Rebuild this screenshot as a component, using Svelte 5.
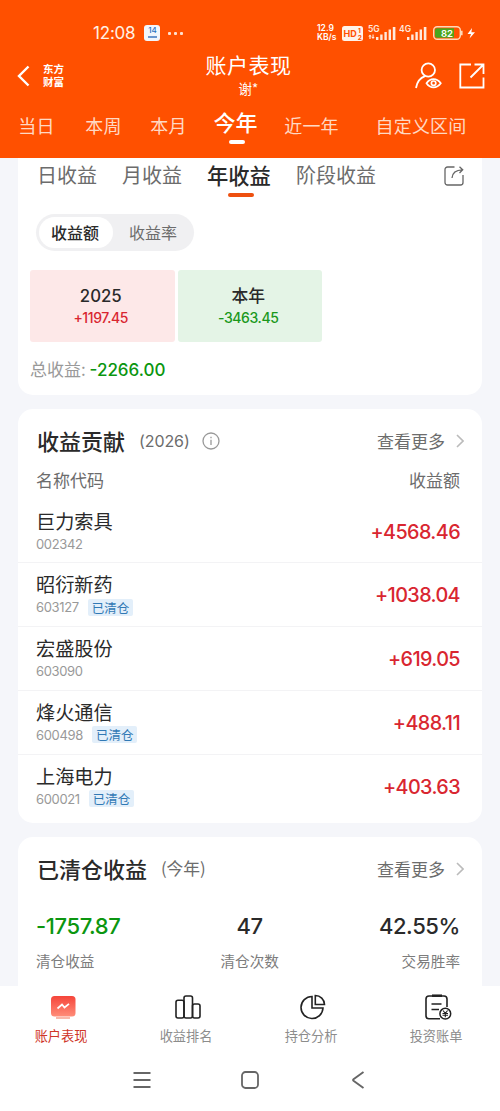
<script>
    let periods = ["当日", "本周", "本月", "今年", "近一年", "自定义区间"];
    let activePeriod = "今年";

    let profitTabs = ["日收益", "月收益", "年收益", "阶段收益"];
    let activeProfitTab = "年收益";

    let mode = "收益额";

    const years = [
        { label: "2025", value: "+1197.45", up: true },
        { label: "本年", value: "-3463.45", up: false }
    ];

    const stocks = [
        { name: "巨力索具", code: "002342", closed: false, profit: "+4568.46" },
        { name: "昭衍新药", code: "603127", closed: true, profit: "+1038.04" },
        { name: "宏盛股份", code: "603090", closed: false, profit: "+619.05" },
        { name: "烽火通信", code: "600498", closed: true, profit: "+488.11" },
        { name: "上海电力", code: "600021", closed: true, profit: "+403.63" }
    ];
</script>

<div class="screen">
    <header>
        <div class="status">
            <span class="time">12:08</span>
            <span class="calendar"><b>14</b><i></i></span>
            <span class="more"><i></i><i></i><i></i></span>
            <span class="spacer"></span>
            <span class="speed">12.9<br />KB/s</span>
            <svg class="hd" width="21" height="15" viewBox="0 0 21 15">
                <rect width="21" height="15" rx="2.5" fill="#fff3ea" />
                <text x="1.5" y="11" font-size="9" font-weight="700" fill="#ff5000">HD</text>
                <text x="16" y="7" font-size="6.5" font-weight="700" fill="#ff5000">1</text>
                <text x="15.7" y="13.5" font-size="6.5" font-weight="700" fill="#ff5000">2</text>
            </svg>
            <svg class="signal" width="28" height="16" viewBox="0 0 28 16" fill="#ffeadd">
                <text x="0" y="7" font-size="8.5" font-weight="600">5G</text>
                <path d="M2 9.5 3.8 11.5H2.6V14H1.4V11.5H.2zM5 14 3.4 12H4.5V9.5H5.6V12H6.7z" />
                <rect x="8" y="12" width="2.4" height="3" />
                <rect x="12.2" y="9.5" width="2.4" height="5.5" />
                <rect x="16.4" y="7" width="2.4" height="8" />
                <rect x="20.6" y="4.5" width="2.4" height="10.5" />
                <rect x="24.8" y="2" width="2.6" height="13" />
            </svg>
            <svg class="signal second" width="28" height="16" viewBox="0 0 28 16" fill="#ffeadd">
                <text x="0" y="7" font-size="8.5" font-weight="600">4G</text>
                <rect x="8" y="12" width="2.4" height="3" />
                <rect x="12.2" y="9.5" width="2.4" height="5.5" />
                <rect x="16.4" y="7" width="2.4" height="8" />
                <rect x="20.6" y="4.5" width="2.4" height="10.5" />
                <rect x="24.8" y="2" width="2.6" height="13" />
            </svg>
            <svg class="battery" width="42" height="14" viewBox="0 0 42 14">
                <rect x=".7" y=".7" width="26.6" height="12.6" rx="3.5" fill="none" stroke="#ffd9b8" stroke-width="1.4" />
                <path d="M4 2.2H21V11.8H4a2 2 0 0 1-2-2V4.2a2 2 0 0 1 2-2z" fill="#4aa51c" />
                <path d="M28.8 4.7v4.6" stroke="#ffd9b8" stroke-width="1.6" />
                <text x="8" y="10.5" font-size="9.5" font-weight="600" fill="#fff">82</text>
                <path d="M39 2 34.5 8H38l-1.5 4.5L42 6.2h-3.6z" fill="#fff" />
            </svg>
        </div>

        <div class="titlebar">
            <div class="side">
                <svg width="13" height="22" viewBox="0 0 13 22">
                    <path d="M11.5 1.5 2 11l9.5 9.5" fill="none" stroke="#fff" stroke-width="2.4" />
                </svg>
                <div class="brand"><span>东方</span><span>财富</span></div>
            </div>
            <div class="title">
                <h1>账户表现</h1>
                <p>谢*</p>
            </div>
            <div class="side right">
                <svg width="27" height="27" viewBox="0 0 27 27" fill="none" stroke="#fff" stroke-width="1.8">
                    <circle cx="13.3" cy="8" r="6.7" />
                    <path d="M1 26C2 20 5 16 10 14.2" />
                    <path d="M11.5 21.3c3.5-5.6 10.5-5.6 14.3 0c-3.8 5.4-10.8 5.4-14.3 0z" stroke-width="1.7" />
                    <circle cx="18.6" cy="21.2" r="2.2" stroke-width="1.7" />
                </svg>
                <svg width="26" height="26" viewBox="0 0 26 26" fill="none" stroke="#fff" stroke-width="1.8">
                    <path d="M12 1.5H1.3V24.5H24.5V14.5M15.5 1.5H24.5V11M24 2 11.5 14.5" />
                </svg>
            </div>
        </div>

        <nav class="periods">
            {#each periods as period}
                <button class:active={period === activePeriod} on:click={() => (activePeriod = period)}>{period}</button>
            {/each}
        </nav>
    </header>

    <main>
        <section class="card overview">
            <div class="profit-tabs">
                {#each profitTabs as tab}
                    <button class:active={tab === activeProfitTab} on:click={() => (activeProfitTab = tab)}>{tab}</button>
                {/each}
                <svg width="20" height="20" viewBox="0 0 20 20" fill="none" stroke="#666" stroke-width="1.3">
                    <path d="M10.5 1H3.5A2.5 2.5 0 0 0 1 3.5V16.5A2.5 2.5 0 0 0 3.5 19H16.5A2.5 2.5 0 0 0 19 16.5V9" />
                    <path d="M8 12C8.3 7 11.5 4 18.5 3.8M15.5 .8 18.7 3.8 15.5 7" />
                </svg>
            </div>

            <div class="segment">
                {#each ["收益额", "收益率"] as item}
                    <button class:active={mode === item} on:click={() => (mode = item)}>{item}</button>
                {/each}
            </div>

            <div class="tiles">
                {#each years as year}
                    <div class="tile" class:up={year.up}>
                        <strong>{year.label}</strong>
                        <span>{year.value}</span>
                    </div>
                {/each}
            </div>

            <p class="total">总收益: <b>-2266.00</b></p>
        </section>

        <section class="card contribution">
            <div class="card-head">
                <h2>收益贡献</h2>
                <span class="note">(2026)</span>
                <svg class="info" width="18" height="18" viewBox="0 0 18 18" fill="none" stroke="#999" stroke-width="1.3">
                    <circle cx="9" cy="9" r="8" />
                    <path d="M9 7.8V13M9 4.8V6.3" />
                </svg>
                <span class="link">查看更多</span>
                <svg width="8" height="14" viewBox="0 0 8 14"><path d="M1 1 7 7 1 13" fill="none" stroke="#bbb" stroke-width="1.6" /></svg>
            </div>
            <div class="columns"><span>名称代码</span><span>收益额</span></div>
            {#each stocks as stock (stock.code)}
                <div class="row">
                    <div>
                        <h3>{stock.name}</h3>
                        <p class="code">
                            {stock.code}
                            {#if stock.closed}<span class="tag">已清仓</span>{/if}
                        </p>
                    </div>
                    <span class="profit">{stock.profit}</span>
                </div>
            {/each}
        </section>

        <section class="card closed">
            <div class="card-head">
                <h2>已清仓收益</h2>
                <span class="note cjk">(今年)</span>
                <span class="link">查看更多</span>
                <svg width="8" height="14" viewBox="0 0 8 14"><path d="M1 1 7 7 1 13" fill="none" stroke="#bbb" stroke-width="1.6" /></svg>
            </div>
            <div class="stats">
                <div><b class="down">-1757.87</b><span>清仓收益</span></div>
                <div><b>47</b><span>清仓次数</span></div>
                <div><b>42.55%</b><span>交易胜率</span></div>
            </div>
        </section>
    </main>

    <footer>
        <nav class="tabbar">
            <div class="tab active">
                <svg width="28" height="28" viewBox="0 0 28 28">
                    <defs>
                        <linearGradient id="chartFill" x1="0" y1="0" x2="0" y2="1">
                            <stop offset="0" stop-color="#f5453a" />
                            <stop offset="1" stop-color="#ff8d79" />
                        </linearGradient>
                    </defs>
                    <rect x="2" y="2" width="24.5" height="20.5" rx="3.5" fill="url(#chartFill)" />
                    <path d="M7 24h14" stroke="#f9a08e" stroke-width="1.5" />
                    <path d="M8.5 14.5 13 10.5 15.5 13.5 20 9.8" fill="none" stroke="#fff" stroke-width="1.7" />
                </svg>
                <span>账户表现</span>
            </div>
            <div class="tab">
                <svg width="28" height="28" viewBox="0 0 28 28" fill="none" stroke="#222" stroke-width="1.6">
                    <rect x="2" y="6.3" width="8" height="17.7" rx="2" />
                    <rect x="10" y="2" width="8.5" height="22" rx="2" />
                    <rect x="18.5" y="10" width="7.5" height="14" rx="2" />
                </svg>
                <span>收益排名</span>
            </div>
            <div class="tab">
                <svg width="28" height="28" viewBox="0 0 28 28" fill="none" stroke="#222" stroke-width="1.6">
                    <path d="M13 2.5A11 11 0 1 0 24 14H13z" />
                    <path d="M16.3 1.5V10.5H25.5A9.2 9.2 0 0 0 16.3 1.5z" />
                </svg>
                <span>持仓分析</span>
            </div>
            <div class="tab">
                <svg width="28" height="28" viewBox="0 0 28 28" fill="none" stroke="#222" stroke-width="1.6">
                    <path d="M16 24.7H5A3 3 0 0 1 2 21.7V5A3 3 0 0 1 5 2H20A3 3 0 0 1 23 5V13" />
                    <path d="M8 1.7H18" stroke-width="2.5" />
                    <path d="M7.5 10H17.5M7.5 15.5H15" />
                    <circle cx="21.3" cy="19.7" r="5.4" fill="#fff" stroke-width="1.5" />
                    <path d="M19 16.5 21.3 19.3 23.6 16.5M18.5 19.5H24M18.5 21.3H24M21.3 19.3V23.2" stroke-width="1.1" />
                </svg>
                <span>投资账单</span>
            </div>
        </nav>
        <div class="system">
            <svg width="18" height="18" viewBox="0 0 18 18" stroke="#666" stroke-width="2"><path d="M.5 2H17.5M.5 9H17.5M.5 16H17.5" /></svg>
            <svg width="18" height="18" viewBox="0 0 18 18" fill="none" stroke="#666" stroke-width="1.8"><rect x="1" y="1" width="16" height="16" rx="3.5" /></svg>
            <svg width="18" height="18" viewBox="0 0 18 18" fill="none" stroke="#666" stroke-width="1.9"><path d="M14.5 1 4.5 8.2Q3.6 9 4.5 9.8L14.5 17" /></svg>
        </div>
    </footer>
</div>

<style>
:global(body) {
    margin: 0;
    background: #f5f6fa;
}

.screen {
    width: 500px;
    height: 1111px;
    display: flex;
    flex-direction: column;
    overflow: hidden;
    background: #f5f6fa;
    color: #2a2a2a;
    font-family: "Noto Sans CJK SC", sans-serif;
}

h1, h2, h3, p {
    margin: 0;
    font-weight: 400;
}

button {
    border: none;
    background: none;
    padding: 0;
    font: inherit;
    color: inherit;
    white-space: nowrap;
}

svg {
    display: block;
    flex: none;
}

/* Header */
header {
    height: 158px;
    flex: none;
    background: #ff5000;
    color: #fff;
}

.status {
    height: 50px;
    box-sizing: border-box;
    padding: 16px 25px 0 93px;
    display: flex;
    align-items: center;
    font-family: Inter, sans-serif;
}

.time {
    font-size: 17px;
    letter-spacing: -0.2px;
    color: #fff0e4;
}

.calendar {
    width: 16px;
    height: 16px;
    margin-left: 9px;
    border-radius: 3px;
    background: #f2f6fc;
    color: #2a70bd;
    display: flex;
    flex-direction: column;
    align-items: center;
}

.calendar b {
    font-size: 8px;
    line-height: 11px;
    font-weight: 500;
}

.calendar i {
    width: 9px;
    height: 2px;
    background: #6996ce;
}

.more {
    display: flex;
    gap: 3px;
    margin-left: 8px;
}

.more i {
    width: 3px;
    height: 3px;
    border-radius: 1px;
    background: #ffe0cf;
}

.spacer {
    flex: 1;
}

.speed {
    font-size: 8.5px;
    line-height: 9px;
    font-weight: 600;
    width: 25px;
}

.signal {
    margin-left: 5px;
}

.signal.second {
    margin-left: 3px;
}

.battery {
    margin-left: 6px;
}

.titlebar {
    height: 50px;
    display: grid;
    grid-template-columns: 1fr auto 1fr;
    align-items: center;
}

.side {
    display: flex;
    align-items: center;
    padding-left: 17px;
    gap: 12px;
}

.side.right {
    justify-content: flex-end;
    padding: 0 15px 0 0;
    gap: 17px;
}

.brand {
    display: flex;
    flex-direction: column;
    padding-left: 1px;
    font-size: 10.5px;
    line-height: 12.5px;
    font-weight: 700;
}

.title {
    text-align: center;
    padding: 0 3px 3px 0;
}

.title h1 {
    font-size: 21px;
    line-height: 28px;
    letter-spacing: 0.5px;
}

.title p {
    font-size: 13.5px;
    line-height: 20px;
}

.periods {
    height: 58px;
    display: grid;
    grid-template-columns: 73px 61px 69px 65px 87px 132px;
}

.periods button {
    height: 50px;
    font-size: 18px;
    line-height: 50px;
    letter-spacing: 0.2px;
    color: #ffd9c4;
    display: flex;
    flex-direction: column;
    align-items: center;
}

.periods button.active {
    font-size: 22px;
    font-weight: 500;
    line-height: 42px;
    letter-spacing: 0;
    color: #fff;
}

.periods button.active::after {
    content: "";
    width: 16px;
    height: 4px;
    border-radius: 2px;
    margin-top: -2px;
    margin-left: 2px;
    flex: none;
    background: #fff;
}

/* Cards */
main {
    flex: 1;
    min-height: 0;
    overflow: hidden;
    padding: 0 18px;
    display: flex;
    flex-direction: column;
    gap: 14px;
}

.card {
    background: #fff;
    border-radius: 15px;
    flex: none;
    box-sizing: border-box;
}

.overview {
    height: 237px;
    border-radius: 0 0 15px 15px;
    padding: 0 18px 0 12px;
}

.profit-tabs {
    height: 56px;
    padding-left: 7px;
    display: flex;
    gap: 25px;
}

.profit-tabs button {
    height: 39px;
    font-size: 20px;
    line-height: 33px;
    color: #6c6c6c;
    display: flex;
    flex-direction: column;
    align-items: center;
}

.profit-tabs .active {
    font-size: 21.3px;
    font-weight: 500;
    color: #2a2a2a;
}

.profit-tabs .active::after {
    content: "";
    width: 26px;
    height: 4px;
    margin: 2px 0 0 4px;
    border-radius: 2px;
    background: #ee500f;
    flex: none;
}

.profit-tabs svg {
    margin: 8px 0 0 auto;
}

.segment {
    width: 158px;
    height: 37px;
    margin-left: 6px;
    box-sizing: border-box;
    padding: 3px;
    border-radius: 19px;
    background: #f0f0f2;
    display: flex;
}

.segment button {
    width: 74px;
    padding: 0 2px 2px 0;
    font-size: 16px;
    line-height: 28px;
    border-radius: 16px;
    color: #6c6c6c;
    margin-right: 4px;
    flex: none;
}

.segment .active {
    background: #fff;
    color: #2a2a2a;
    font-weight: 500;
}

.tiles {
    display: flex;
    gap: 3px;
    margin-top: 19px;
}

.tile {
    width: 144.5px;
    height: 72px;
    box-sizing: border-box;
    padding: 14px 3px 0 0;
    border-radius: 3px;
    background: #e4f4e6;
    color: #1a981c;
    display: flex;
    flex-direction: column;
    align-items: center;
}

.tile.up {
    background: #fde8e8;
    color: #d92630;
}

.tile strong {
    font-family: Inter, "Noto Sans CJK SC", sans-serif;
    font-size: 16.8px;
    line-height: 25px;
    font-weight: 500;
    color: #2a2a2a;
}

.tile span {
    font-family: Inter, sans-serif;
    font-size: 14px;
    line-height: 18px;
    font-weight: 500;
    letter-spacing: -0.4px;
}

.total {
    margin-top: 14px;
    font-size: 17px;
    line-height: 25px;
    color: #999;
}

.total b {
    font-family: Inter, sans-serif;
    font-weight: 500;
    font-size: 17px;
    color: #0b9610;
}

.contribution {
    height: 414px;
}

.card-head {
    height: 63px;
    padding: 0 18px 0 19px;
    display: flex;
    align-items: center;
}

.card-head h2 {
    font-size: 22px;
    font-weight: 500;
    padding-bottom: 2px;
}

.note {
    margin-left: 14px;
    font-family: Inter, sans-serif;
    font-size: 16px;
    letter-spacing: -0.1px;
    color: #6c6c6c;
}

.note.cjk {
    font-family: "Noto Sans CJK SC", sans-serif;
    font-size: 16.8px;
    padding-bottom: 2px;
}

.info {
    margin-left: 12px;
}

.link {
    margin-left: auto;
    margin-right: 11px;
    padding-bottom: 1px;
    font-size: 17px;
    color: #6c6c6c;
}

.columns {
    height: 27.5px;
    padding: 0 22px 0 18px;
    display: flex;
    justify-content: space-between;
    font-size: 17px;
    line-height: 15px;
    color: #6c6c6c;
}

.row {
    height: 63.8px;
    box-sizing: border-box;
    padding: 8px 22px 0 18px;
    display: flex;
    justify-content: space-between;
    border-bottom: 1px solid #f3f3f5;
}

.row:last-child {
    border-bottom: none;
}

.row h3 {
    font-size: 19.2px;
    line-height: 27px;
}

.code {
    display: flex;
    align-items: center;
    gap: 9px;
    height: 18px;
    font-family: Inter, sans-serif;
    font-size: 13px;
    letter-spacing: -0.35px;
    color: #999;
}

.tag {
    padding: 0 4px;
    border-radius: 2px;
    background: #e3effa;
    color: #3179b5;
    font-family: "Noto Sans CJK SC", sans-serif;
    font-size: 12.5px;
    line-height: 17px;
    letter-spacing: 0;
}

.profit {
    font-family: Inter, sans-serif;
    font-size: 19.8px;
    font-weight: 500;
    line-height: 48px;
    letter-spacing: -0.6px;
    color: #d92630;
}

.closed {
    height: 170px;
}

.stats {
    display: flex;
    justify-content: space-between;
    padding: 9px 22px 0 18px;
}

.stats div {
    display: flex;
    flex-direction: column;
    align-items: center;
}

.stats div:first-child {
    align-items: flex-start;
}

.stats div:last-child {
    align-items: flex-end;
}

.stats b {
    font-family: Inter, sans-serif;
    font-size: 22px;
    line-height: 34px;
    font-weight: 500;
    letter-spacing: -0.4px;
}

.stats .down {
    color: #0b9610;
}

.stats span {
    font-size: 14.6px;
    line-height: 35px;
    color: #7c7c7c;
}

/* Bottom bars */
footer {
    height: 125px;
    flex: none;
    background: #fff;
}

.tabbar {
    height: 63px;
    display: grid;
    grid-template-columns: repeat(4, 1fr);
}

.tab {
    padding-top: 8px;
    display: flex;
    flex-direction: column;
    align-items: center;
    font-size: 13.2px;
    line-height: 28px;
    color: #8c8c8c;
}

.tab span {
    padding-right: 3px;
}

.tab.active {
    color: #cf3628;
}

.system {
    display: flex;
    justify-content: center;
    gap: 90px;
    padding-top: 22px;
}
</style>
